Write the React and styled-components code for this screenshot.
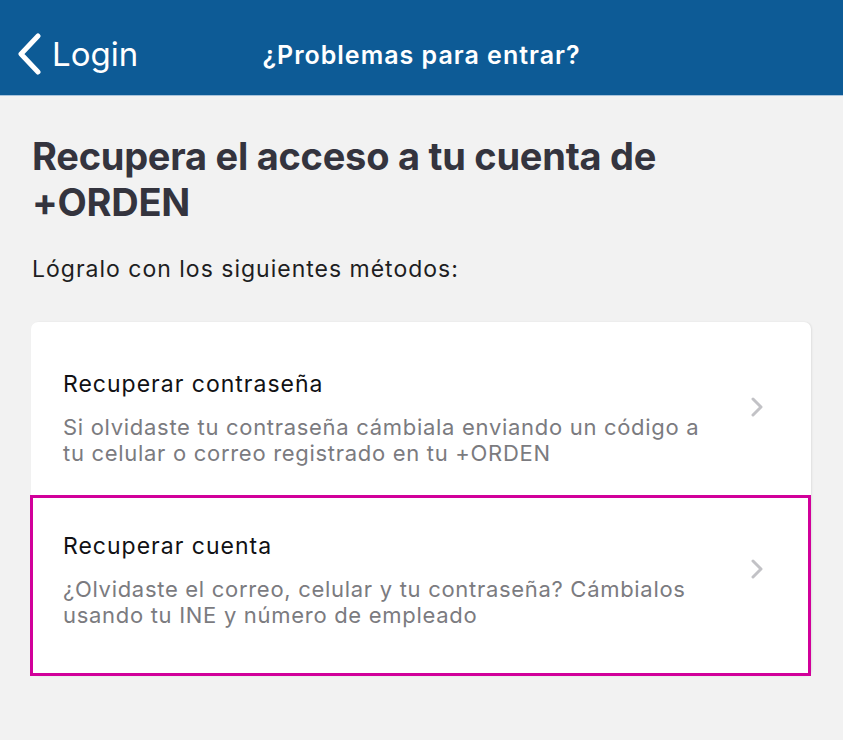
import React from 'react';
import styled, { createGlobalStyle } from 'styled-components';

const GlobalStyle = createGlobalStyle`
  html, body {
    margin: 0;
    padding: 0;
    background: #f2f2f2;
  }
  body {
    font-family: Inter, "Noto Sans", sans-serif;
    -webkit-font-smoothing: antialiased;
  }
`;

const methods = [
  {
    title: 'Recuperar contraseña',
    desc: 'Si olvidaste tu contraseña cámbiala enviando un código a tu celular o correo registrado en tu +ORDEN',
  },
  {
    title: 'Recuperar cuenta',
    desc: '¿Olvidaste el correo, celular y tu contraseña? Cámbialos usando tu INE y número de empleado',
    highlighted: true,
  },
];

function Chevron() {
  return (
    <svg width="14" height="20" viewBox="0 0 14 20" fill="none">
      <path d="M3 2l8 8-8 8" stroke="#c2c2c6" strokeWidth="3" strokeLinecap="round" strokeLinejoin="round" />
    </svg>
  );
}

function App() {
  return (
    <Page>
      <GlobalStyle />
      <NavBar>
        <BackButton>
          <svg width="26" height="42" viewBox="0 0 26 42" fill="none">
            <path d="M22 3L5 21l17 18" stroke="#fff" strokeWidth="5" strokeLinecap="round" strokeLinejoin="round" />
          </svg>
          <BackLabel>Login</BackLabel>
        </BackButton>
        <NavTitle>¿Problemas para entrar?</NavTitle>
      </NavBar>

      <Content>
        <Heading>Recupera el acceso a tu cuenta de +ORDEN</Heading>
        <Lead>Lógralo con los siguientes métodos:</Lead>

        <Card>
          {methods.map((m, i) => (
            <MethodRow key={i} highlighted={m.highlighted}>
              <MethodText>
                <MethodTitle>{m.title}</MethodTitle>
                <MethodDesc>{m.desc}</MethodDesc>
              </MethodText>
              <ChevronSlot>
                <Chevron />
              </ChevronSlot>
            </MethodRow>
          ))}
        </Card>
      </Content>
    </Page>
  );
}

export default App;

const Page = styled.div`
  min-height: 740px;
  background: #f2f2f2;
`;

const NavBar = styled.header`
  display: grid;
  grid-template-columns: 1fr auto 1fr;
  align-items: center;
  height: 96px;
  padding: 12px 16px 0;
  background: #0d5b96;
  border-bottom: 1px solid #a9c4dc;
  box-sizing: border-box;
`;

const BackButton = styled.div`
  display: flex;
  align-items: center;
  gap: 10px;
  color: #fff;
`;

const BackLabel = styled.span`
  font-size: 33px;
  font-weight: 400;
`;

const NavTitle = styled.div`
  color: #fff;
  font-size: 25px;
  font-weight: 600;
  letter-spacing: 1px;
  white-space: nowrap;
  margin-top: 2px;
`;

const Content = styled.main`
  padding: 37px 32px 0 31px;
`;

const Heading = styled.h1`
  margin: 0 0 0 1px;
  max-width: 700px;
  font-size: 38px;
  font-weight: 700;
  line-height: 46px;
  letter-spacing: -0.25px;
  color: #34343e;
`;

const Lead = styled.p`
  margin: 30px 0 0 1px;
  font-size: 23px;
  line-height: 28px;
  letter-spacing: 1px;
  color: #1e1e22;
`;

const Card = styled.section`
  margin-top: 39px;
  background: #fff;
  border-radius: 7px;
  box-shadow: 1px 0 2px rgba(0, 0, 0, 0.08);
`;

const MethodRow = styled.div`
  display: flex;
  align-items: flex-start;
  padding: ${(p) => (p.highlighted ? '34px 44px 45px 30px' : '48px 47px 29px 32px')};
  border: ${(p) => (p.highlighted ? '3px solid #d1009a' : 'none')};
  margin-left: ${(p) => (p.highlighted ? '-1px' : '0')};
`;

const MethodText = styled.div`
  flex: 1;
  max-width: 660px;
`;

const MethodTitle = styled.div`
  font-size: 23px;
  line-height: 28px;
  letter-spacing: 1px;
  color: #111114;
`;

const MethodDesc = styled.div`
  margin-top: 16px;
  font-size: 22px;
  line-height: 26px;
  letter-spacing: 0.7px;
  color: #7b7b7f;
`;

const ChevronSlot = styled.div`
  display: flex;
  margin-left: auto;
  padding-top: 27px;
`;
